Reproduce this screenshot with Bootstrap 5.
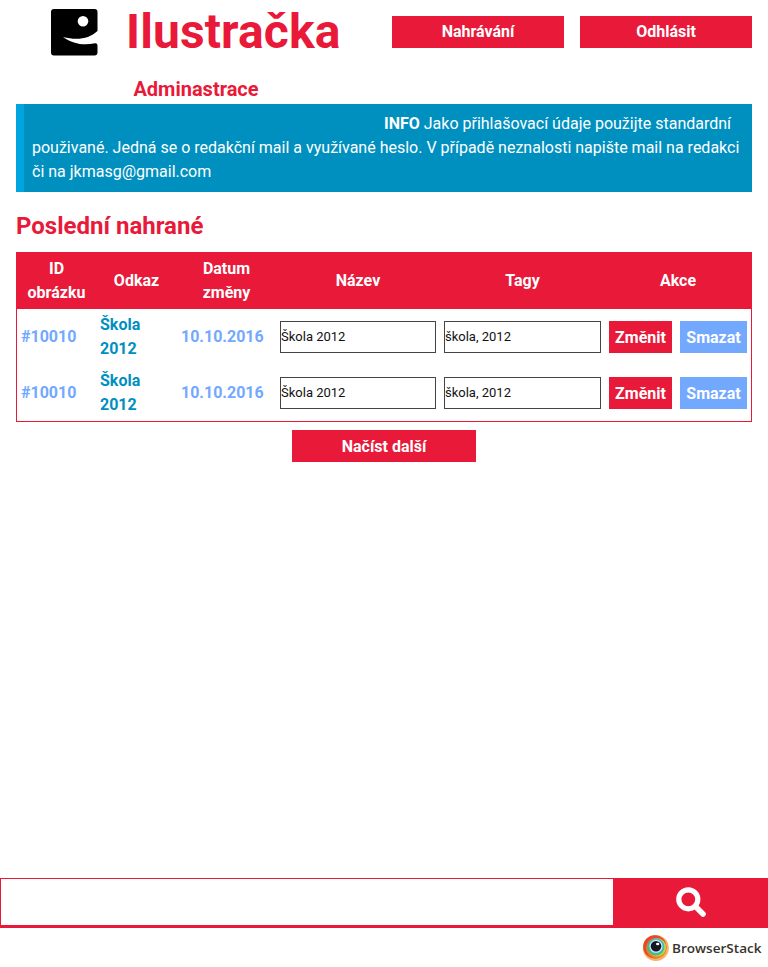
<!DOCTYPE html>
<html lang="cs">
<head>
<meta charset="utf-8">
<meta name="viewport" content="width=device-width, initial-scale=1">
<title>Ilustračka</title>
<link href="https://cdn.jsdelivr.net/npm/bootstrap@5.3.0/dist/css/bootstrap.min.css" rel="stylesheet">
<style>
:root{--red:#e81939;--blue:#0090bf;--sky:#73a8ff}
body{font-family:Roboto,sans-serif;font-size:16px;line-height:24px;color:#111}
.text-red{color:var(--red)}
.site-head{height:64px}
.logo-box{width:47px;height:47px;margin:9px 0 0 51px}
.site-title{margin-left:28px;font-size:48px;line-height:64px;font-weight:700;letter-spacing:.12px;white-space:nowrap}
.head-actions{width:360px;padding-top:16px}
.flat{height:32px;border:0;border-radius:0;padding:0;background:var(--red);color:#fff;font-weight:700;line-height:32px;font-size:16px}
.flat:hover{background:#c51530;color:#fff}
button.flat{padding-top:1px;line-height:31px}
.flat-sky{background:var(--sky)}
.sub-title{width:392px;font-size:20px;line-height:24px;font-weight:700;padding-top:13px;height:40px}
.info{height:88px;background:var(--blue);border-left:8px solid #00a5e0}
.info-label{margin-left:352px}
.section-title{font-size:24px;line-height:32px;font-weight:700;margin-top:18px;margin-bottom:10px}
.grid-table{table-layout:fixed;border:1px solid var(--red);border-collapse:separate;border-spacing:0;height:170px}
.grid-table th{background:var(--red);color:#fff;font-weight:700;padding:4px;height:56px}
.grid-table td{height:56px;padding:4px;font-weight:700}
.id-cell,.date-cell{color:var(--sky)}
.link-cell{color:var(--blue)}
.field{height:32px;border:1px solid #444;font-size:13px;padding:0 0 1px;color:#111;background:#fff}
.w-change{width:63px}.w-delete{width:67px}
.more{width:184px}
.searchbar{height:50px;border:1px solid var(--red);border-width:1px 0 3px 1px;background:var(--red)}
.search-field{width:612px;background:#fff;outline:0}
.brand-foot{height:39px;padding:7px 6px 0 0}
</style>
<script src="https://cdn.jsdelivr.net/npm/bootstrap@5.3.0/dist/js/bootstrap.bundle.min.js"></script>
</head>
<body class="d-flex flex-column min-vh-100 bg-white">
<header>
  <div class="site-head d-flex">
    <svg class="logo-box flex-shrink-0" viewBox="0 0 47 47" role="img"><path fill="#000" d="M3 0H43.500Q46.500 0 46.500 3V22C38 30 26 31.500 12 28C22 35.500 34 36.500 44 34.200Q46.500 34 46.500 36.500V43.500Q46.500 46.500 43.500 46.500H3Q0 46.500 0 43.500V3Q0 0 3 0Z"/><circle cx="32" cy="12.300" r="5.300" fill="#fff"/></svg>
    <h1 class="site-title text-red mb-0">Ilustračka</h1>
    <nav class="head-actions d-flex gap-3 ms-auto me-3">
      <a class="btn flat flex-fill w-50" href="#">Nahrávání</a>
      <a class="btn flat flex-fill w-50" href="#">Odhlásit</a>
    </nav>
  </div>
  <h2 class="sub-title text-red text-center mb-0">Adminastrace</h2>
</header>
<main class="px-3 flex-grow-1">
  <p class="info text-white p-2 mb-0"><strong class="info-label">INFO</strong> Jako přihlašovací údaje použijte standardní použivané. Jedná se o redakční mail a využívané heslo. V případě neznalosti napište mail na redakci či na jkmasg@gmail.com</p>
  <h2 class="section-title text-red">Poslední nahrané</h2>
  <table class="grid-table w-100 align-middle">
    <colgroup><col style="width:79px"><col style="width:81px"><col style="width:99px"><col style="width:164px"><col style="width:165px"><col style="width:146px"></colgroup>
    <thead class="text-center"><tr><th>ID obrázku</th><th>Odkaz</th><th>Datum změny</th><th>Název</th><th>Tagy</th><th>Akce</th></tr></thead>
    <tbody>
      <tr><td class="id-cell">#10010</td><td class="link-cell">Škola 2012</td><td class="date-cell">10.10.2016</td>
        <td><input class="field d-block w-100" value="Škola 2012"></td><td><input class="field d-block w-100" value="škola, 2012"></td>
        <td><div class="d-flex gap-2"><button class="btn flat w-change">Změnit</button><button class="btn flat flat-sky w-delete">Smazat</button></div></td></tr>
      <tr><td class="id-cell">#10010</td><td class="link-cell">Škola 2012</td><td class="date-cell">10.10.2016</td>
        <td><input class="field d-block w-100" value="Škola 2012"></td><td><input class="field d-block w-100" value="škola, 2012"></td>
        <td><div class="d-flex gap-2"><button class="btn flat w-change">Změnit</button><button class="btn flat flat-sky w-delete">Smazat</button></div></td></tr>
    </tbody>
  </table>
  <button class="btn flat more d-block mx-auto mt-2">Načíst další</button>
</main>
<footer>
  <form class="searchbar d-flex">
    <input class="search-field border-0" type="text">
    <button class="btn p-0 border-0 rounded-0 flex-grow-1" type="button">
      <svg width="32" height="32" viewBox="0 0 32 32" fill="none" stroke="#fff"><circle cx="13.300" cy="13.300" r="9.500" stroke-width="5.200"/><path d="M20.500 20.600L28 28" stroke-width="5.600" stroke-linecap="round"/></svg>
    </button>
  </form>
  <div class="brand-foot d-flex justify-content-end">
    <svg width="120" height="27" viewBox="0 0 120 27">
      <circle cx="13.800" cy="13" r="13" fill="#f3b46a"/><circle cx="12.800" cy="11.800" r="11.600" fill="#e5492c"/><circle cx="14.300" cy="13" r="10.300" fill="#ee7a2d"/><circle cx="15" cy="12.400" r="9.200" fill="#b9d54a"/><circle cx="13.700" cy="12" r="8.600" fill="#5ab558"/><circle cx="14.200" cy="11.200" r="7.700" fill="#45b6dc"/><circle cx="14" cy="11.300" r="6.500" fill="#c8ecf5"/><circle cx="14" cy="11.300" r="5.300" fill="#161820"/><ellipse cx="15.700" cy="9" rx="1.700" ry="1.300" fill="#fff"/>
      <text x="30" y="17.500" textLength="89.500" lengthAdjust="spacingAndGlyphs" font-family="Open Sans" font-weight="600" font-size="13.300" fill="#37332b">BrowserStack</text>
    </svg>
  </div>
</footer>
</body>
</html>
